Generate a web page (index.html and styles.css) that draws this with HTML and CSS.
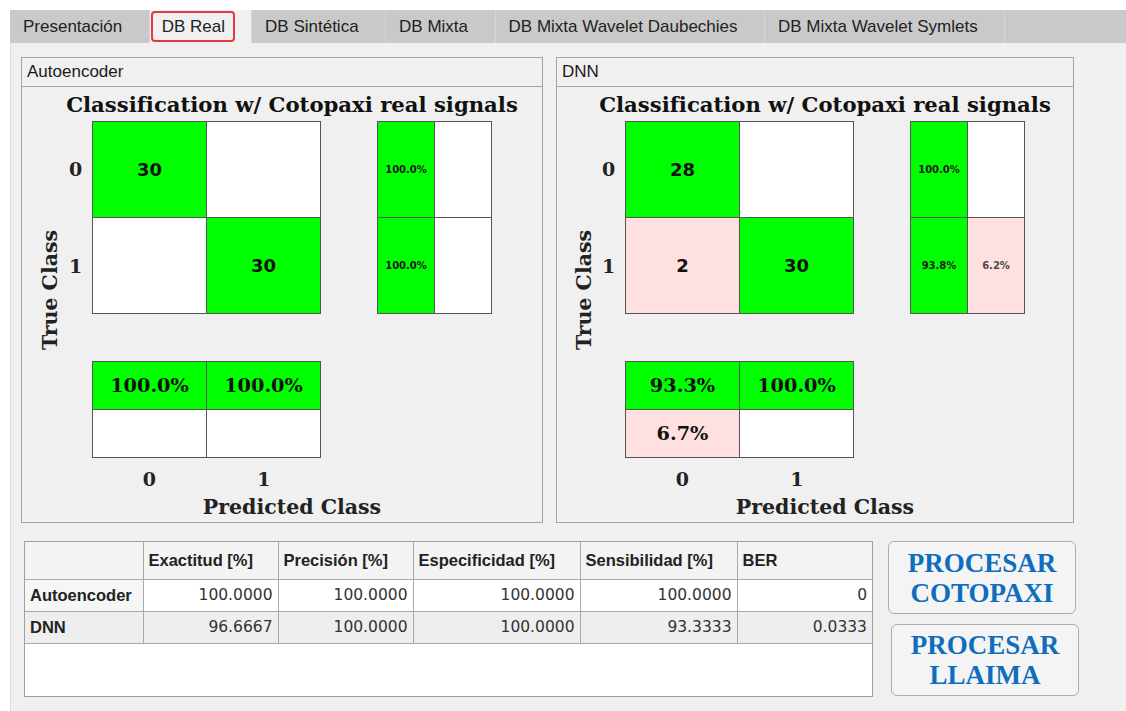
FILE: index.html
```html
<!DOCTYPE html>
<html lang="es">
<head>
<meta charset="utf-8">
<title>DB Real</title>
<link rel="stylesheet" href="styles.css">
</head>
<body>
<div class="app">
  <nav class="tabs">
    <div class="tab">Presentación</div>
    <div class="tab active"><span class="mark">DB Real</span></div>
    <div class="tab">DB Sintética</div>
    <div class="tab">DB Mixta</div>
    <div class="tab">DB Mixta Wavelet Daubechies</div>
    <div class="tab">DB Mixta Wavelet Symlets</div>
  </nav>

  <main class="content">
    <div class="panels">
      <section class="panel panel-ae">
        <div class="panel-title">Autoencoder</div>
        <div class="plot">
          <div class="p-title">Classification w/ Cotopaxi real signals</div>
          <div class="ylabel"><span>True Class</span></div>
          <div class="yticks"><span>0</span><span>1</span></div>
          <div class="cm">
            <div class="c g num">30</div>
            <div class="c w"></div>
            <div class="c w"></div>
            <div class="c g num">30</div>
          </div>
          <div class="rowsum">
            <div class="c g small">100.0%</div>
            <div class="c w"></div>
            <div class="c g small">100.0%</div>
            <div class="c w"></div>
          </div>
          <div class="colsum">
            <div class="c g pct">100.0%</div>
            <div class="c g pct">100.0%</div>
            <div class="c w"></div>
            <div class="c w"></div>
          </div>
          <div class="xticks"><span>0</span><span>1</span></div>
          <div class="xlabel">Predicted Class</div>
        </div>
      </section>

      <section class="panel panel-dnn">
        <div class="panel-title">DNN</div>
        <div class="plot">
          <div class="p-title">Classification w/ Cotopaxi real signals</div>
          <div class="ylabel"><span>True Class</span></div>
          <div class="yticks"><span>0</span><span>1</span></div>
          <div class="cm">
            <div class="c g num">28</div>
            <div class="c w"></div>
            <div class="c p num">2</div>
            <div class="c g num">30</div>
          </div>
          <div class="rowsum">
            <div class="c g small">100.0%</div>
            <div class="c w"></div>
            <div class="c g small">93.8%</div>
            <div class="c p small dim">6.2%</div>
          </div>
          <div class="colsum">
            <div class="c g pct">93.3%</div>
            <div class="c g pct">100.0%</div>
            <div class="c p pct">6.7%</div>
            <div class="c w"></div>
          </div>
          <div class="xticks"><span>0</span><span>1</span></div>
          <div class="xlabel">Predicted Class</div>
        </div>
      </section>
    </div>

    <div class="bottom">
      <div class="table-wrap">
        <table class="metrics">
          <thead>
            <tr>
              <th class="k0"></th>
              <th class="k1">Exactitud [%]</th>
              <th class="k2">Precisión [%]</th>
              <th class="k3">Especificidad [%]</th>
              <th class="k4">Sensibilidad [%]</th>
              <th class="k5">BER</th>
            </tr>
          </thead>
          <tbody>
            <tr>
              <th class="rh">Autoencoder</th>
              <td>100.0000</td>
              <td>100.0000</td>
              <td>100.0000</td>
              <td>100.0000</td>
              <td>0</td>
            </tr>
            <tr class="alt">
              <th class="rh">DNN</th>
              <td>96.6667</td>
              <td>100.0000</td>
              <td>100.0000</td>
              <td>93.3333</td>
              <td>0.0333</td>
            </tr>
          </tbody>
        </table>
      </div>
      <div class="buttons">
        <button class="btn">PROCESAR<br>COTOPAXI</button>
        <button class="btn btn-2">PROCESAR<br>LLAIMA</button>
      </div>
    </div>
  </main>
</div>
</body>
</html>
```

FILE: styles.css
```css
* {
  box-sizing: border-box;
}

body {
  margin: 0;
  background: #ffffff;
  font-family: "Liberation Sans", Arial, sans-serif;
  color: #1e1e1e;
}

.app {
  margin: 10px 0 0 10px;
  width: 1116px;
  height: 701px;
  display: flex;
  flex-direction: column;
}

/* ---- tab strip ---- */
.tabs {
  flex: none;
  display: flex;
  height: 33px;
  background: #c9c9c9;
}

.tab {
  display: flex;
  align-items: center;
  padding: 0 26.5px 0 13px;
  font-size: 17px;
  color: #222;
  border-right: 1px solid #d6d6d6;
  white-space: nowrap;
}

.tab.active {
  background: #f0f0f0;
  padding: 0 16px 0 1px;
}

.mark {
  display: flex;
  align-items: center;
  height: 31px;
  padding: 0 8px 0 9px;
  border: 2px solid #e8383d;
  border-radius: 4px;
}

/* ---- content area ---- */
.content {
  flex: 1;
  background: #f0f0f0;
  border-left: 1px solid #dcdcdc;
  padding: 14px 0 0 10px;
}

.panels {
  display: flex;
  gap: 13px;
}

.panel {
  height: 466px;
  border: 1px solid #a3a3a3;
}

.panel-ae {
  width: 522px;
}

.panel-dnn {
  width: 518px;
}

.panel-title {
  height: 29px;
  padding-left: 5px;
  border-bottom: 1px solid #a3a3a3;
  font-size: 17px;
  line-height: 28px;
  color: #1a1a1a;
}

/* ---- confusion chart ---- */
.plot {
  display: grid;
  grid-template-columns: 48px 22px 229px 56px 115px;
  grid-template-rows: 34px 193px 47px 97px 36px 26px;
  font-family: "DejaVu Serif", serif;
  font-weight: bold;
  color: #222;
}

.panel-dnn .plot {
  grid-template-columns: 46px 22px 229px 56px 115px;
}

.p-title {
  grid-column: 3 / 6;
  grid-row: 1;
  display: flex;
  align-items: center;
  justify-content: center;
  white-space: nowrap;
  font-size: 21.2px;
  color: #111;
}

.ylabel {
  grid-column: 1;
  grid-row: 2 / 5;
  display: flex;
  align-items: center;
  justify-content: center;
  padding-left: 8px;
}

.ylabel span {
  transform: rotate(-90deg);
  white-space: nowrap;
  font-size: 20.5px;
}

.yticks {
  grid-column: 2;
  grid-row: 2;
  display: grid;
  grid-template-rows: 1fr 1fr;
  font-size: 19px;
}

.yticks span {
  display: flex;
  align-items: center;
  margin-left: -1px;
}

.cm,
.rowsum,
.colsum {
  display: grid;
  grid-template-columns: 1fr 1fr;
  grid-template-rows: 1fr 1fr;
  gap: 1px;
  background: #555;
  border: 1px solid #555;
}

.cm {
  grid-column: 3;
  grid-row: 2;
}

.rowsum {
  grid-column: 5;
  grid-row: 2;
}

.colsum {
  grid-column: 3;
  grid-row: 4;
}

.c {
  display: flex;
  align-items: center;
  justify-content: center;
  white-space: nowrap;
}

.g {
  background: #00ff00;
}

.w {
  background: #ffffff;
}

.p {
  background: #ffe0e0;
}

.num {
  font-family: "DejaVu Sans", sans-serif;
  font-size: 18px;
  color: #111;
}

.small {
  font-family: "DejaVu Sans", sans-serif;
  font-size: 10px;
  color: #1c1c1c;
}

.small.dim {
  color: #4a4a4a;
}

.pct {
  font-size: 19.3px;
  color: #111;
}

.xticks {
  grid-column: 3;
  grid-row: 5;
  display: grid;
  grid-template-columns: 1fr 1fr;
  align-items: center;
  padding-top: 6px;
  font-size: 19px;
}

.xticks span {
  text-align: center;
}

.xlabel {
  grid-column: 3 / 6;
  grid-row: 6;
  display: flex;
  align-items: center;
  justify-content: center;
  font-size: 20.5px;
}

/* ---- results table and actions ---- */
.bottom {
  display: flex;
  margin-top: 18px;
  padding-left: 3px;
}

.table-wrap {
  width: 849px;
  height: 156px;
  background: #ffffff;
  border: 1px solid #a0a0a0;
}

.metrics {
  border-collapse: collapse;
  table-layout: fixed;
  width: 847px;
}

.metrics th,
.metrics td {
  border-right: 1px solid #a9a9a9;
  border-bottom: 1px solid #a9a9a9;
  white-space: nowrap;
  overflow: hidden;
}

.metrics th:last-child,
.metrics td:last-child {
  border-right: none;
}

.metrics thead tr {
  height: 37px;
  background: #f3f3f3;
}

.metrics thead th {
  text-align: left;
  padding: 0 0 0 5px;
  font-size: 16.5px;
  font-weight: bold;
  color: #222;
}

.k0 { width: 118px; }
.k1 { width: 135px; }
.k2 { width: 135px; }
.k3 { width: 167px; }
.k4 { width: 157px; }
.k5 { width: 135px; }

.metrics tbody tr {
  height: 32px;
}

.metrics .rh {
  text-align: left;
  padding-left: 5px;
  font-size: 16.5px;
  font-weight: bold;
  color: #222;
  background: #f6f6f6;
}

.metrics td {
  text-align: right;
  padding-right: 5px;
  font-family: "DejaVu Sans", sans-serif;
  font-size: 15.5px;
  color: #333;
}

.metrics tr.alt,
.metrics tr.alt .rh {
  background: #eeeeee;
}

.buttons {
  display: flex;
  flex-direction: column;
  gap: 10px;
  margin-left: 15px;
}

.btn {
  width: 188px;
  height: 73px;
  padding: 0;
  background: #f4f4f4;
  border: 1.5px solid #adadad;
  border-radius: 6px;
  font-family: "Liberation Serif", "Times New Roman", serif;
  font-weight: bold;
  font-size: 27px;
  line-height: 30px;
  color: #0f6dbd;
  text-align: center;
}

.btn-2 {
  margin-left: 3px;
  height: 72px;
}
```
